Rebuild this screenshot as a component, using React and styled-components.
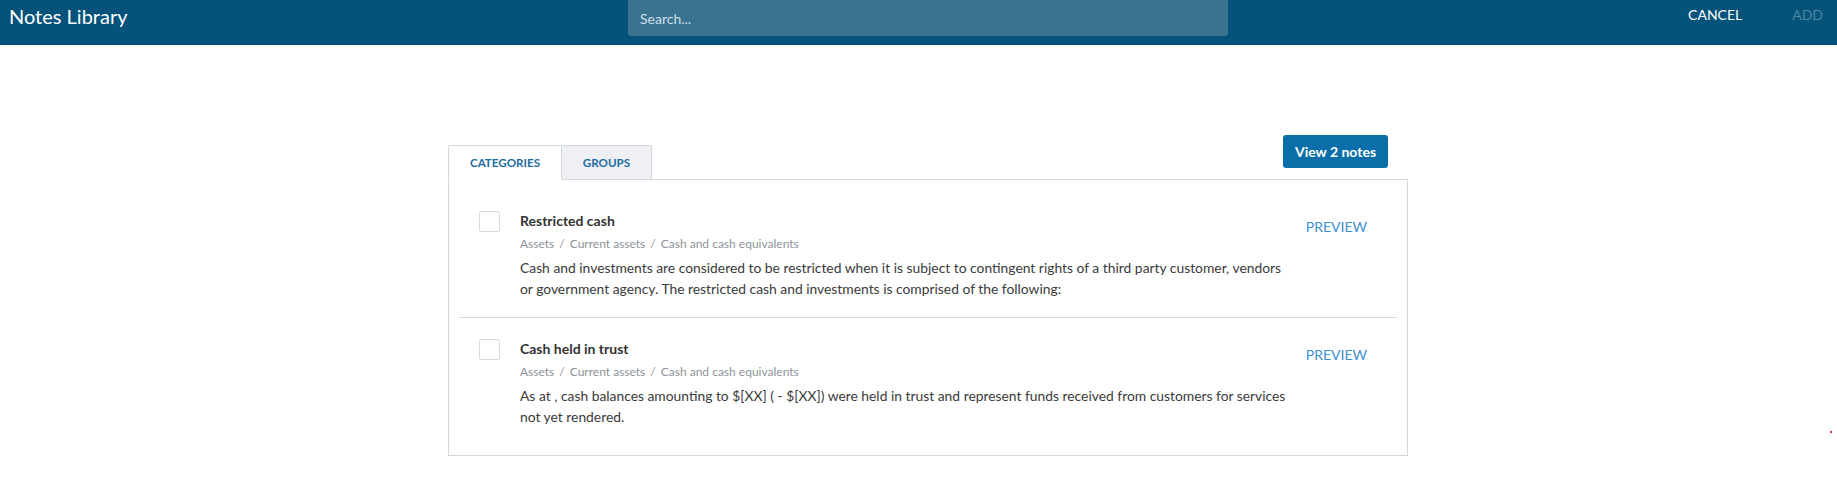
import React from "react";
import styled, { createGlobalStyle } from "styled-components";

const GlobalStyle = createGlobalStyle`
  html, body { margin: 0; padding: 0; background: #ffffff; }
  body { font-family: Lato, "Open Sans", Arial, sans-serif; color: #333; }
  * { box-sizing: border-box; }
`;

const Page = styled.div`
  position: relative;
  width: 100%;
  min-height: 500px;
  background: #fff;
`;

const Header = styled.header`
  display: grid;
  grid-template-columns: 628px 600px 1fr;
  align-items: start;
  height: 45px;
  background: #05537a;
`;

const Title = styled.h1`
  margin: 0;
  padding: 3px 0 0 9px;
  font-size: 20px;
  line-height: 26px;
  font-weight: 400;
  color: #ffffff;
`;

const SearchBox = styled.div`
  height: 36px;
  display: flex;
  align-items: center;
  padding: 0 12px;
  background: #397390;
  border-radius: 0 0 3px 3px;
  font-size: 14px;
  color: #cfdfe8;
`;

const Actions = styled.div`
  display: flex;
  justify-content: flex-end;
  gap: 50px;
  padding: 5px 14px 0 0;
`;

const HeaderButton = styled.button`
  border: 0;
  background: none;
  padding: 0;
  font-family: inherit;
  font-size: 14px;
  line-height: 20px;
  text-transform: uppercase;
  color: ${(p) => (p.$disabled ? "#4f86a3" : "#ffffff")};
  cursor: ${(p) => (p.$disabled ? "default" : "pointer")};
`;

const Main = styled.main`
  padding: 90px 0 0 19px;
`;

const Container = styled.div`
  width: 960px;
  margin: 0 auto;
`;

const TabBar = styled.div`
  display: flex;
  align-items: flex-end;
  justify-content: space-between;
`;

const Tabs = styled.div`
  display: flex;
  margin-bottom: -1px;
`;

const Tab = styled.div`
  height: 35px;
  display: flex;
  align-items: center;
  justify-content: center;
  padding: 0 16px;
  font-size: 11.6px;
  font-weight: 700;
  color: #1b6ca1;
  text-transform: uppercase;
  border: 1px solid #d3d8de;
  border-bottom: ${(p) => (p.$active ? "1px solid #fff" : "1px solid #d3d8de")};
  border-left-width: ${(p) => (p.$first ? "1px" : "0")};
  border-radius: 2px 2px 0 0;
  background: ${(p) => (p.$active ? "#ffffff" : "#eef0f3")};
  width: ${(p) => p.$w}px;
`;

const PrimaryButton = styled.button`
  height: 33px;
  width: 105px;
  margin: 0 20px 11px 0;
  border: 0;
  border-radius: 3px;
  background: #0a6fa8;
  color: #fff;
  font-family: inherit;
  font-size: 14px;
  font-weight: 700;
  cursor: pointer;
`;

const Card = styled.div`
  border: 1px solid #d3d8de;
  padding: 10px;
  background: #fff;
`;

const Row = styled.div`
  display: flex;
  align-items: flex-start;
  padding: 22px 30px 18px 20px;
  border-bottom: ${(p) => (p.$last ? "0" : "1px solid #d5dae0")};
`;

const Checkbox = styled.span`
  flex: none;
  width: 21px;
  height: 21px;
  margin-top: -1px;
  border: 1px solid #d7dbe0;
  border-radius: 2px;
  background: #fff;
`;

const Content = styled.div`
  flex: 1;
  margin-left: 20px;
  min-width: 0;
`;

const NoteTitle = styled.div`
  font-size: 14px;
  line-height: 18px;
  font-weight: 700;
  color: #333;
`;

const Crumbs = styled.div`
  margin-top: 4px;
  font-size: 12px;
  line-height: 20px;
  color: #8d9399;
`;

const Sep = styled.span`
  margin: 0 5px;
`;

const Description = styled.p`
  margin: 4px 0 0;
  font-size: 13.85px;
  line-height: 20.5px;
  color: #3a3a3a;
`;

const Preview = styled.button`
  flex: none;
  margin: 5px 0 0 10px;
  padding: 0;
  border: 0;
  background: none;
  font-family: inherit;
  font-size: 14px;
  line-height: 20px;
  color: #3d8fd1;
  text-transform: uppercase;
  cursor: pointer;
`;

const Dot = styled.span`
  position: absolute;
  left: 1830px;
  top: 431px;
  width: 2px;
  height: 2px;
  background: #e3324a;
`;

const notes = [
  {
    title: "Restricted cash",
    path: ["Assets", "Current assets", "Cash and cash equivalents"],
    text:
      "Cash and investments are considered to be restricted when it is subject to contingent rights of a third party customer, vendors or government agency. The restricted cash and investments is comprised of the following:",
  },
  {
    title: "Cash held in trust",
    path: ["Assets", "Current assets", "Cash and cash equivalents"],
    text:
      "As at , cash balances amounting to $[XX] ( - $[XX]) were held in trust and represent funds received from customers for services not yet rendered.",
  },
];

export default function App() {
  return (
    <Page>
      <GlobalStyle />
      <Header>
        <Title>Notes Library</Title>
        <SearchBox>Search...</SearchBox>
        <Actions>
          <HeaderButton>Cancel</HeaderButton>
          <HeaderButton $disabled>Add</HeaderButton>
        </Actions>
      </Header>
      <Main>
        <Container>
          <TabBar>
            <Tabs>
              <Tab $active $first $w={114}>Categories</Tab>
              <Tab $w={90}>Groups</Tab>
            </Tabs>
            <PrimaryButton>View 2 notes</PrimaryButton>
          </TabBar>
          <Card>
            {notes.map((n, i) => (
              <Row key={n.title} $last={i === notes.length - 1}>
                <Checkbox />
                <Content>
                  <NoteTitle>{n.title}</NoteTitle>
                  <Crumbs>
                    {n.path.map((p, j) => (
                      <React.Fragment key={p}>
                        {j > 0 && <Sep>/</Sep>}
                        {p}
                      </React.Fragment>
                    ))}
                  </Crumbs>
                  <Description>{n.text}</Description>
                </Content>
                <Preview>Preview</Preview>
              </Row>
            ))}
          </Card>
        </Container>
      </Main>
      <Dot />
    </Page>
  );
}
